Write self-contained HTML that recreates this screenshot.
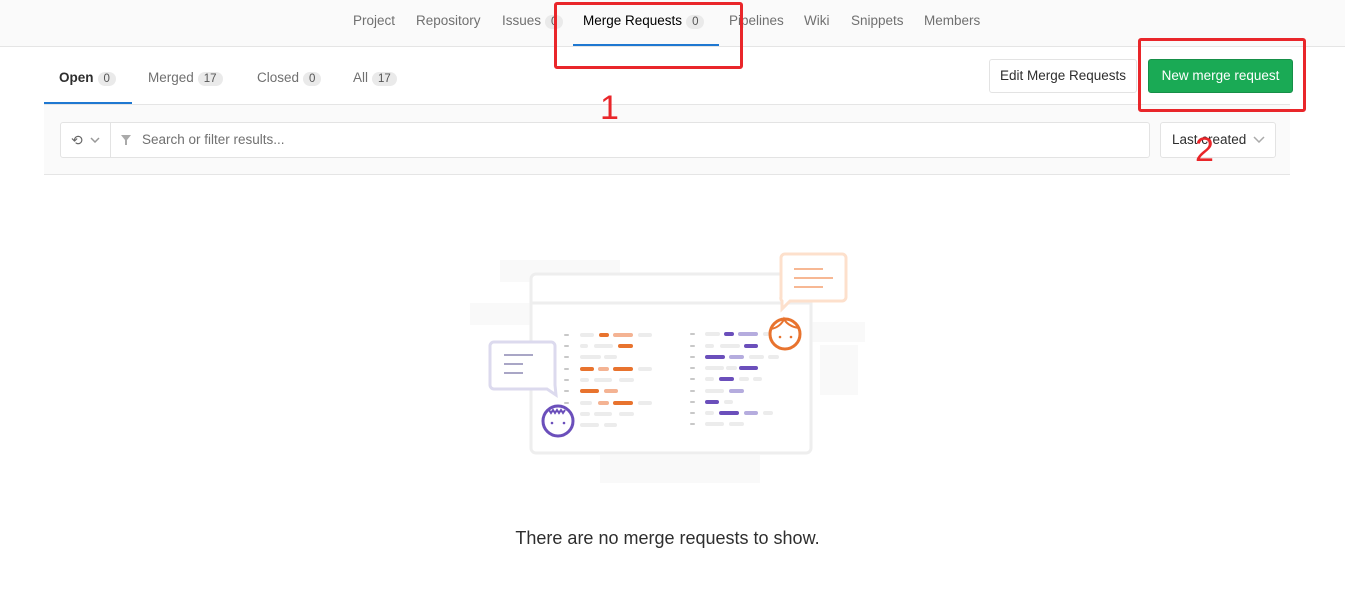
<!DOCTYPE html>
<html><head><meta charset="utf-8"><style>
*{box-sizing:border-box;margin:0;padding:0}
body{width:1345px;height:595px;overflow:hidden;background:#fff;font-family:"Liberation Sans",sans-serif;color:#2e2e2e;position:relative}
.abs{position:absolute}
.topbar{left:0;top:0;width:1345px;height:47px;background:#fafafa;border-bottom:1px solid #e5e5e5}
.nav{top:13px;font-size:13.5px;color:#707070}
.badge{display:inline-block;background:#eaeaea;border-radius:9px;font-size:11.5px;padding:1px 6px;color:#555;margin-left:4px}
.tab{top:70px;font-size:13.5px;color:#707070}
.btn{border:1px solid #e3e3e3;border-radius:3px;background:#fff;font-size:13.5px;text-align:center}
</style></head><body>
<div class="abs topbar"></div>
<div class="abs nav" style="left:353px">Project</div>
<div class="abs nav" style="left:416px">Repository</div>
<div class="abs nav" style="left:502px">Issues<span class="badge">0</span></div>
<div class="abs nav" style="left:583px;color:#000">Merge Requests<span class="badge">0</span></div>
<div class="abs nav" style="left:729px">Pipelines</div>
<div class="abs nav" style="left:804px">Wiki</div>
<div class="abs nav" style="left:851px">Snippets</div>
<div class="abs nav" style="left:924px">Members</div>
<div class="abs" style="left:573px;top:44px;width:146px;height:2px;background:#1f78d1"></div>
<div class="abs" style="left:554px;top:2px;width:189px;height:67px;border:3px solid #e9262a;border-radius:3px"></div>

<div class="abs tab" style="left:59px;color:#2e2e2e;font-weight:bold">Open<span class="badge" style="font-weight:normal">0</span></div>
<div class="abs tab" style="left:148px">Merged<span class="badge">17</span></div>
<div class="abs tab" style="left:257px">Closed<span class="badge">0</span></div>
<div class="abs tab" style="left:353px">All<span class="badge">17</span></div>
<div class="abs" style="left:44px;top:102px;width:88px;height:2px;background:#1f78d1"></div>
<div class="abs" style="left:44px;top:104px;width:1246px;height:71px;background:#fafafa;border-top:1px solid #e5e5e5;border-bottom:1px solid #e5e5e5"></div>

<div class="abs btn" style="left:989px;top:59px;width:148px;height:34px;line-height:32px;color:#2e2e2e">Edit Merge Requests</div>
<div class="abs btn" style="left:1148px;top:59px;width:145px;height:34px;line-height:32px;background:#1aaa55;border-color:#168f48;color:#fff">New merge request</div>
<div class="abs" style="left:1138px;top:38px;width:168px;height:74px;border:3px solid #e9262a;border-radius:3px"></div>
<div class="abs" style="left:600px;top:88px;font-size:34px;color:#e9262a;line-height:40px">1</div>

<div class="abs btn" style="left:60px;top:122px;width:51px;height:36px;border-radius:3px 0 0 3px"></div>
<div class="abs" style="left:71px;top:132px;font-size:14px;color:#666">⟲</div>
<svg class="abs" style="left:90px;top:137px" width="10" height="6"><path d="M1 1l4 4 4-4" stroke="#999" fill="none" stroke-width="1.5"/></svg>
<div class="abs btn" style="left:110px;top:122px;width:1040px;height:36px;border-radius:0 3px 3px 0"></div>
<svg class="abs" style="left:121px;top:135px" width="10" height="10"><path d="M0 0h10L6 5v5H4V5z" fill="#aaa"/></svg>
<div class="abs" style="left:142px;top:132px;font-size:13.5px;color:#707070">Search or filter results...</div>
<div class="abs btn" style="left:1160px;top:122px;width:116px;height:36px"></div>
<div class="abs" style="left:1172px;top:132px;font-size:13.5px;color:#2e2e2e">Last created</div>
<svg class="abs" style="left:1253px;top:136px" width="12" height="7"><path d="M1 1l5 5 5-5" stroke="#aaa" fill="none" stroke-width="1.5"/></svg>
<div class="abs" style="left:1195px;top:130px;font-size:34px;color:#e9262a;line-height:40px">2</div>

<svg class="abs" style="left:0;top:0" width="1345" height="595">
<g fill="#f9f9f9"><rect x="500" y="260" width="120" height="22"/><rect x="470" y="303" width="62" height="22"/><rect x="810" y="322" width="55" height="20"/><rect x="820" y="345" width="38" height="50"/><rect x="600" y="455" width="160" height="28"/></g>
<rect x="531" y="274" width="280" height="179" rx="5" fill="#fff" stroke="#eee" stroke-width="3"/>
<line x1="531" y1="303" x2="811" y2="303" stroke="#eee" stroke-width="3"/>
<path d="M785 254h57a4 4 0 0 1 4 4v39a4 4 0 0 1-4 4h-52l-8 8v-8a4 4 0 0 1-1-4v-39a4 4 0 0 1 4-4z" fill="#fff" stroke="#fde0cc" stroke-width="3"/>
<g stroke="#f7b894" stroke-width="2"><line x1="794" y1="269" x2="823" y2="269"/><line x1="794" y1="278" x2="833" y2="278"/><line x1="794" y1="287" x2="823" y2="287"/></g>
<path d="M494 342h57a4 4 0 0 1 4 4v39l1 10-9-6h-53a4 4 0 0 1-4-4v-39a4 4 0 0 1 4-4z" fill="#fff" stroke="#dcdaee" stroke-width="3"/>
<g stroke="#a9a6c6" stroke-width="2"><line x1="504" y1="355" x2="533" y2="355"/><line x1="504" y1="364" x2="523" y2="364"/><line x1="504" y1="373" x2="523" y2="373"/></g>
<g stroke-linecap="round" stroke-width="4">
<g stroke="#c8c8c8" stroke-width="2"><line x1="565" y1="335" x2="568" y2="335"/><line x1="565" y1="346" x2="568" y2="346"/><line x1="565" y1="357" x2="568" y2="357"/><line x1="565" y1="369" x2="568" y2="369"/><line x1="565" y1="380" x2="568" y2="380"/><line x1="565" y1="391" x2="568" y2="391"/><line x1="565" y1="403" x2="568" y2="403"/>
<line x1="691" y1="334" x2="694" y2="334"/><line x1="691" y1="346" x2="694" y2="346"/><line x1="691" y1="357" x2="694" y2="357"/><line x1="691" y1="368" x2="694" y2="368"/><line x1="691" y1="379" x2="694" y2="379"/><line x1="691" y1="391" x2="694" y2="391"/><line x1="691" y1="402" x2="694" y2="402"/><line x1="691" y1="413" x2="694" y2="413"/><line x1="691" y1="424" x2="694" y2="424"/></g>
<g stroke="#ececec">
<line x1="582" y1="335" x2="592" y2="335"/><line x1="640" y1="335" x2="650" y2="335"/>
<line x1="582" y1="346" x2="586" y2="346"/><line x1="596" y1="346" x2="611" y2="346"/>
<line x1="582" y1="357" x2="599" y2="357"/><line x1="606" y1="357" x2="615" y2="357"/><line x1="640" y1="369" x2="650" y2="369"/>
<line x1="582" y1="380" x2="587" y2="380"/><line x1="596" y1="380" x2="610" y2="380"/><line x1="621" y1="380" x2="632" y2="380"/>
<line x1="582" y1="403" x2="590" y2="403"/><line x1="640" y1="403" x2="650" y2="403"/>
<line x1="582" y1="414" x2="588" y2="414"/><line x1="596" y1="414" x2="610" y2="414"/><line x1="621" y1="414" x2="632" y2="414"/>
<line x1="582" y1="425" x2="597" y2="425"/><line x1="606" y1="425" x2="615" y2="425"/>
<line x1="707" y1="334" x2="718" y2="334"/><line x1="765" y1="334" x2="768" y2="334"/><line x1="707" y1="346" x2="712" y2="346"/><line x1="722" y1="346" x2="738" y2="346"/>
<line x1="751" y1="357" x2="762" y2="357"/><line x1="770" y1="357" x2="777" y2="357"/><line x1="707" y1="368" x2="722" y2="368"/><line x1="728" y1="368" x2="735" y2="368"/>
<line x1="707" y1="379" x2="712" y2="379"/><line x1="741" y1="379" x2="747" y2="379"/><line x1="755" y1="379" x2="760" y2="379"/><line x1="707" y1="391" x2="722" y2="391"/>
<line x1="726" y1="402" x2="731" y2="402"/><line x1="707" y1="413" x2="712" y2="413"/><line x1="765" y1="413" x2="771" y2="413"/><line x1="707" y1="424" x2="722" y2="424"/><line x1="731" y1="424" x2="742" y2="424"/></g>
<g stroke="#e8732e"><line x1="601" y1="335" x2="607" y2="335"/><line x1="620" y1="346" x2="631" y2="346"/><line x1="582" y1="369" x2="592" y2="369"/><line x1="615" y1="369" x2="631" y2="369"/><line x1="582" y1="391" x2="597" y2="391"/><line x1="615" y1="403" x2="631" y2="403"/></g>
<g stroke="#f4b393"><line x1="615" y1="335" x2="631" y2="335"/><line x1="600" y1="369" x2="607" y2="369"/><line x1="606" y1="391" x2="616" y2="391"/><line x1="600" y1="403" x2="607" y2="403"/></g>
<g stroke="#6b4fbb"><line x1="726" y1="334" x2="732" y2="334"/><line x1="746" y1="346" x2="756" y2="346"/><line x1="707" y1="357" x2="723" y2="357"/><line x1="741" y1="368" x2="756" y2="368"/><line x1="721" y1="379" x2="732" y2="379"/><line x1="707" y1="402" x2="717" y2="402"/><line x1="721" y1="413" x2="737" y2="413"/></g>
<g stroke="#b5acde"><line x1="740" y1="334" x2="756" y2="334"/><line x1="731" y1="357" x2="742" y2="357"/><line x1="731" y1="391" x2="742" y2="391"/><line x1="746" y1="413" x2="756" y2="413"/></g>
</g>
<circle cx="785" cy="334" r="15" fill="#fff" stroke="#e8732e" stroke-width="3"/>
<path d="M771 329c6-1 11-5 13-10 2 4 7 8 15 9" fill="none" stroke="#e8732e" stroke-width="2"/>
<circle cx="780" cy="337" r="1.3" fill="#e8732e"/><circle cx="791" cy="337" r="1.3" fill="#e8732e"/>
<circle cx="558" cy="421" r="15" fill="#fff" stroke="#6b4fbb" stroke-width="3"/>
<path d="M549 410l2 3 2-3 2 3 2-3 2 3 2-3 2 3 2-3" fill="none" stroke="#6b4fbb" stroke-width="2"/>
<circle cx="552" cy="423" r="1.3" fill="#6b4fbb"/><circle cx="564" cy="423" r="1.3" fill="#6b4fbb"/>
</svg>

<div class="abs" style="left:0;width:1335px;top:528px;text-align:center;font-size:18px;color:#2e2e2e">There are no merge requests to show.</div>
</body></html>
